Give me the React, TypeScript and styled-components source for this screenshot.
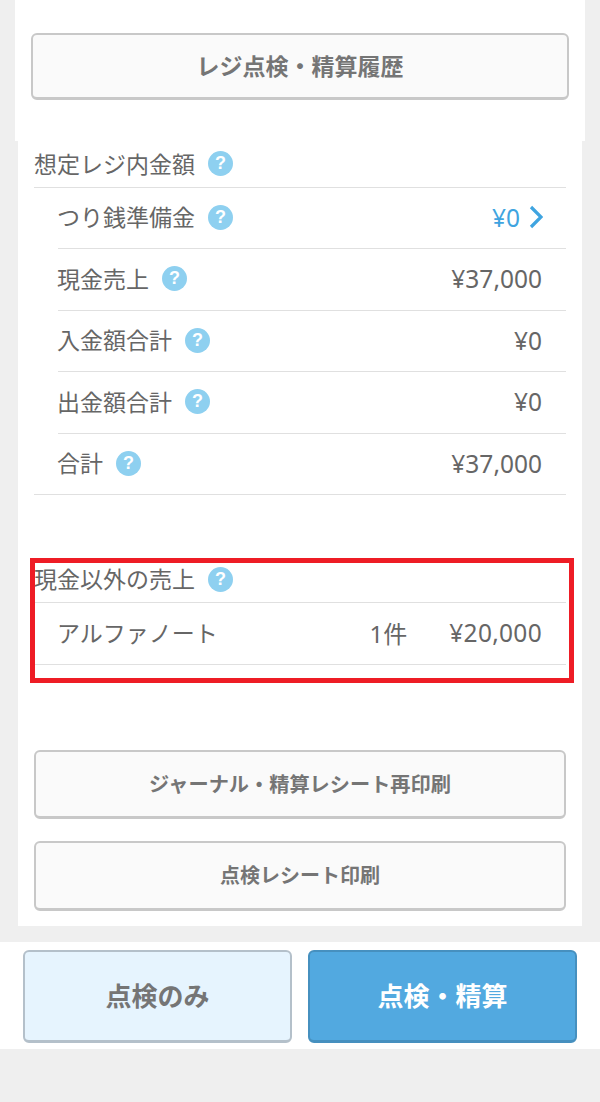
import styled, { createGlobalStyle } from "styled-components";

const GlobalStyle = createGlobalStyle`
  html, body {
    margin: 0;
    padding: 0;
    background: #efefef;
  }
  body {
    font-family: "Noto Sans CJK JP", "Liberation Sans", sans-serif;
    color: #666;
  }
`;

const Page = styled.div`
  width: 600px;
  height: 1102px;
  overflow: hidden;
  display: flex;
  flex-direction: column;
`;

const TopCard = styled.div`
  margin: 0 15px;
  height: 141px;
  padding: 33px 16px 0;
  box-sizing: border-box;
  background: #fff;
`;

const Content = styled.div`
  margin: 0 18px;
  height: 785px;
  padding: 0 16px;
  box-sizing: border-box;
  background: #fff;
  position: relative;
`;

const GhostButton = styled.div<{ $h: number; $size: number }>`
  height: ${({ $h }) => $h}px;
  box-sizing: border-box;
  display: flex;
  align-items: center;
  justify-content: center;
  padding-bottom: 2px;
  background: #fafafa;
  border: 2px solid #c8c8c8;
  border-bottom-width: 3px;
  border-radius: 6px;
  font-size: ${({ $size }) => $size}px;
  font-weight: 700;
  color: #757575;
`;

const SectionTitle = styled.div<{ $top: number }>`
  margin-top: ${({ $top }) => $top}px;
  height: 46.5px;
  box-sizing: border-box;
  display: flex;
  align-items: center;
  gap: 13px;
  padding-bottom: 2px;
  border-bottom: 1px solid #e0e0e0;
  font-size: 23px;
  color: #666;
`;

const Row = styled.div<{ $full?: boolean }>`
  height: 61.5px;
  box-sizing: border-box;
  margin-left: ${({ $full }) => ($full ? 0 : 24)}px;
  padding-left: ${({ $full }) => ($full ? 24 : 0)}px;
  padding-right: 24px;
  padding-bottom: 1px;
  display: flex;
  align-items: center;
  border-bottom: 1px solid #e0e0e0;
  font-size: 23px;
  color: #666;
`;

const RowLabel = styled.div`
  display: flex;
  align-items: center;
  gap: 13px;
  flex: 1;
  margin-left: -1px;
  padding-bottom: 2px;
`;

const Amount = styled.div<{ $link?: boolean }>`
  font-family: "Noto Sans", "Noto Sans CJK JP", sans-serif;
  font-size: 24.5px;
  color: ${({ $link }) => ($link ? "#3fa4e0" : "#666")};
  display: flex;
  align-items: center;
  gap: 9px;
`;

const ChevronIcon = styled.svg`
  margin-right: -1px;
  flex: none;
`;

const Count = styled.div`
  font-family: "Noto Sans", "Noto Sans CJK JP", sans-serif;
  font-size: 24px;
  margin-right: 42px;
`;

const WideAmount = styled(Amount)`
  letter-spacing: 0.3px;
`;

const Highlight = styled.div`
  position: absolute;
  left: 12px;
  top: 417px;
  width: 544px;
  height: 125px;
  box-sizing: border-box;
  border: 5px solid #ee1c25;
`;

const ActionStack = styled.div`
  margin-top: 85.5px;
  display: flex;
  flex-direction: column;
  gap: 22px;
`;

const BottomBar = styled.div`
  margin-top: 16px;
  height: 107px;
  padding: 8px 23px 0;
  box-sizing: border-box;
  background: #fff;
  display: flex;
  gap: 16px;
`;

const FooterButton = styled.div<{ $primary?: boolean }>`
  flex: 1;
  height: 93px;
  box-sizing: border-box;
  display: flex;
  align-items: center;
  justify-content: center;
  padding-bottom: 3px;
  border-radius: 6px;
  border: 2px solid ${({ $primary }) => ($primary ? "#4690bf" : "#b4c0ca")};
  border-bottom-width: 3px;
  background: ${({ $primary }) => ($primary ? "#52a9e0" : "#e6f4fe")};
  color: ${({ $primary }) => ($primary ? "#fff" : "#757575")};
  font-size: 26px;
  font-weight: 700;
`;

const HelpBadge = styled.span`
  width: 25px;
  height: 25px;
  margin-top: 2px;
  border-radius: 50%;
  background: #8ed0f0;
  color: #fff;
  font-family: "Liberation Sans", sans-serif;
  font-size: 18px;
  font-weight: 700;
  line-height: 25px;
  text-align: center;
  flex: none;
`;

const Chevron = () => (
  <ChevronIcon width="14" height="24" viewBox="0 0 14 24" fill="none">
    <path d="M2 2 L12 12 L2 22" stroke="#3fa4e0" strokeWidth="3.2" />
  </ChevronIcon>
);

const rows = [
  { label: "現金売上", amount: "¥37,000" },
  { label: "入金額合計", amount: "¥0" },
  { label: "出金額合計", amount: "¥0" },
];

export default function App() {
  return (
    <>
      <GlobalStyle />
      <Page>
        <TopCard>
          <GhostButton $h={67} $size={23}>
            レジ点検・精算履歴
          </GhostButton>
        </TopCard>
        <Content>
          <SectionTitle $top={0}>
            想定レジ内金額
            <HelpBadge>?</HelpBadge>
          </SectionTitle>
          <Row>
            <RowLabel>
              つり銭準備金
              <HelpBadge>?</HelpBadge>
            </RowLabel>
            <Amount $link>
              ¥0
              <Chevron />
            </Amount>
          </Row>
          {rows.map((row) => (
            <Row key={row.label}>
              <RowLabel>
                {row.label}
                <HelpBadge>?</HelpBadge>
              </RowLabel>
              <Amount>{row.amount}</Amount>
            </Row>
          ))}
          <Row $full>
            <RowLabel>
              合計
              <HelpBadge>?</HelpBadge>
            </RowLabel>
            <Amount>¥37,000</Amount>
          </Row>
          <SectionTitle $top={61.5}>
            現金以外の売上
            <HelpBadge>?</HelpBadge>
          </SectionTitle>
          <Row $full>
            <RowLabel>アルファノート</RowLabel>
            <Count>1件</Count>
            <WideAmount>¥20,000</WideAmount>
          </Row>
          <Highlight />
          <ActionStack>
            <GhostButton $h={69} $size={20.2}>
              ジャーナル・精算レシート再印刷
            </GhostButton>
            <GhostButton $h={70} $size={20}>
              点検レシート印刷
            </GhostButton>
          </ActionStack>
        </Content>
        <BottomBar>
          <FooterButton>点検のみ</FooterButton>
          <FooterButton $primary>点検・精算</FooterButton>
        </BottomBar>
      </Page>
    </>
  );
}
